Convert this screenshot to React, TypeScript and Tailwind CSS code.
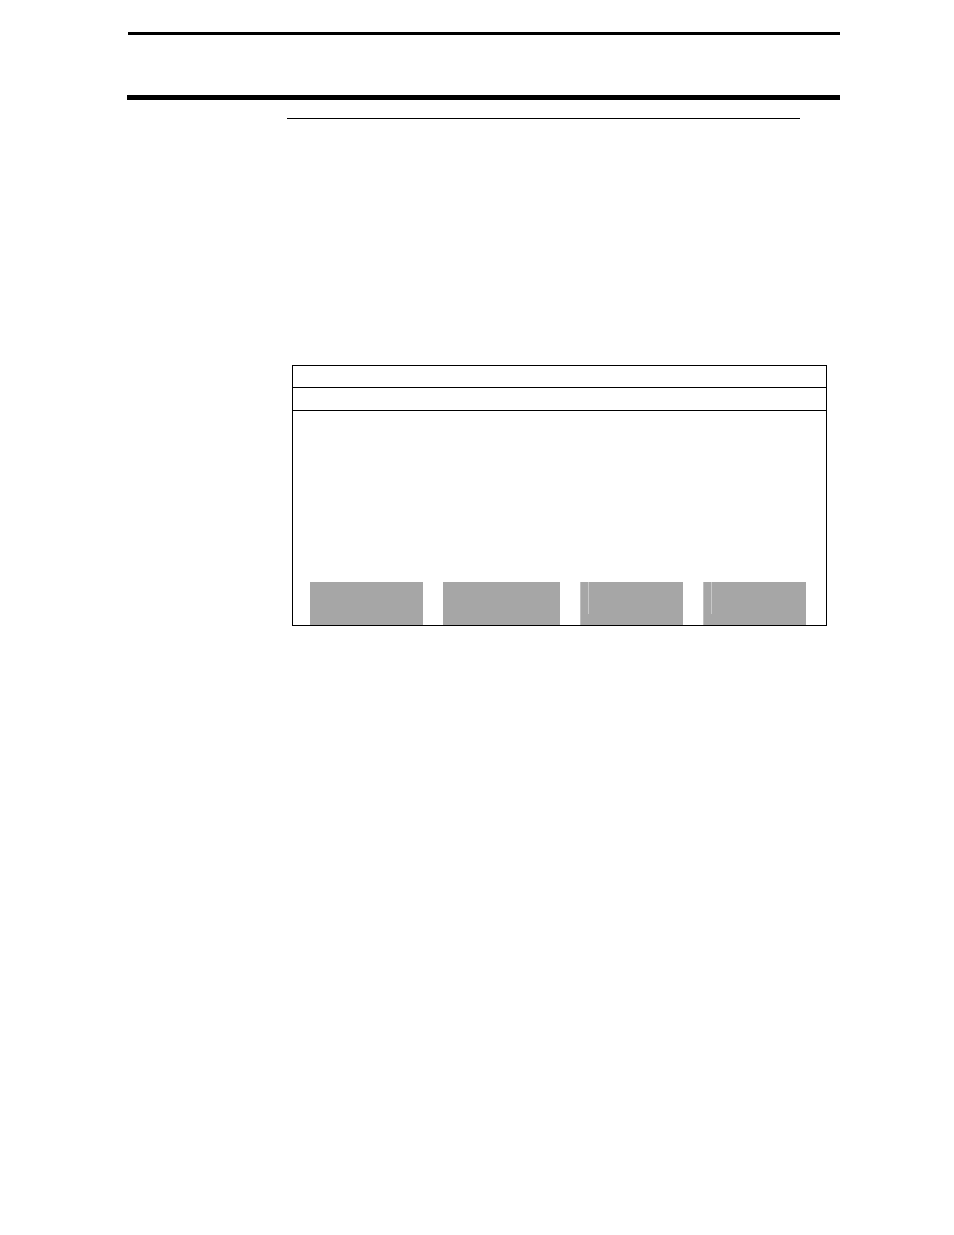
import React from 'react';

const softKeys = [
  { id: 'f1', divided: false },
  { id: 'f2', divided: false },
  { id: 'f3', divided: true },
  { id: 'f4', divided: true },
];

const SoftKey: React.FC<{ divided: boolean }> = ({ divided }) => {
  if (!divided) {
    return <div className="bg-[#a6a6a6]"></div>;
  }

  return (
    <div className="border-l border-[#c0c0c0] bg-[#a6a6a6]">
      <div className="h-8 w-2 border-r border-[#c8c8c8]"></div>
    </div>
  );
};

const DisplayPanel: React.FC = () => (
  <section className="flex flex-col border border-black">
    {/* Title and status rows */}
    <div className="h-[22px] border-b border-black"></div>
    <div className="h-[23px] border-b border-black"></div>

    {/* Display area */}
    <div className="h-[171px]"></div>

    {/* Soft keys */}
    <div className="grid h-[43px] grid-cols-[113fr_117fr_103fr_103fr] gap-5 pr-5 pl-[17px]">
      {softKeys.map((key) => (
        <SoftKey key={key.id} divided={key.divided} />
      ))}
    </div>
  </section>
);

const App: React.FC = () => {
  return (
    <div className="min-h-screen bg-white pt-8 font-['Liberation_Sans',sans-serif]">
      {/* Page header */}
      <header className="mr-[114px] ml-[127px]">
        <div className="ml-px h-[3px] bg-black"></div>
        <div className="mt-[60px] h-[5px] bg-black"></div>
      </header>

      <main className="mr-[127px] ml-[287px] pt-[18px]">
        <hr className="mr-[27px] border-t border-black" />
        <div className="mt-[246px] ml-[5px]">
          <DisplayPanel />
        </div>
      </main>
    </div>
  );
};

export default App;
